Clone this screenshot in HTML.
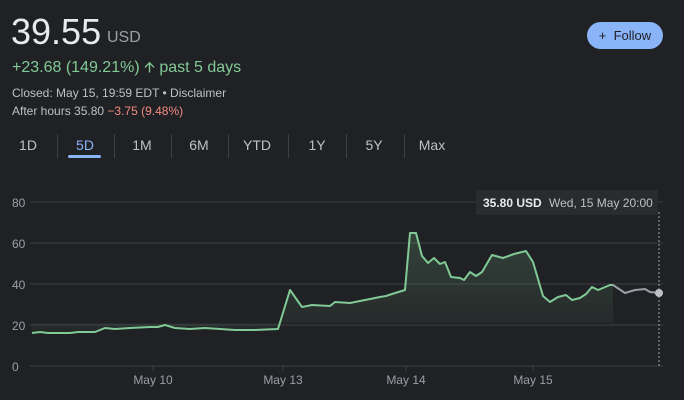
<!DOCTYPE html>
<html><head><style>
body{margin:0;width:684px;height:400px;background:#202124;font-family:"Liberation Sans",Arial,sans-serif;position:relative;overflow:hidden;color:#e8eaed}
.a{position:absolute;white-space:nowrap}
.tab{position:absolute;top:137px;font-size:14px;color:#bdc1c6;transform:translateX(-50%)}
.sep{position:absolute;top:134px;width:1px;height:24px;background:#3c4043}
</style></head><body>
<div class="a" style="left:11px;top:11px;font-size:36px;color:#e8eaed">39.55</div>
<div class="a" style="left:107px;top:29px;font-size:16px;color:#9aa0a6">USD</div>
<div class="a" style="left:12px;top:57px;font-size:16px;color:#81c995">+23.68 (149.21%) <span style="font-size:15px">&#129129;</span> past 5 days</div>
<div class="a" style="left:12px;top:86px;font-size:12px;color:#bdc1c6">Closed: May 15, 19:59 EDT • Disclaimer</div>
<div class="a" style="left:12px;top:104px;font-size:12px;color:#bdc1c6">After hours 35.80 <span style="color:#f28b82">−3.75 (9.48%)</span></div>
<div class="a" style="left:587px;top:22px;width:76px;height:27px;border-radius:14px;background:#8ab4f8;color:#202124;font-size:13px;line-height:27px;text-align:center">+&nbsp; Follow</div>
<div class="tab" style="left:28px">1D</div>
<div class="tab" style="left:85px;color:#8ab4f8">5D</div>
<div class="a" style="left:68px;top:155px;width:33px;height:3px;border-radius:2px;background:#8ab4f8"></div>
<div class="tab" style="left:142px">1M</div>
<div class="tab" style="left:199px">6M</div>
<div class="tab" style="left:257px">YTD</div>
<div class="tab" style="left:317px">1Y</div>
<div class="tab" style="left:374px">5Y</div>
<div class="tab" style="left:432px">Max</div>
<div class="sep" style="left:57px"></div><div class="sep" style="left:114px"></div><div class="sep" style="left:171px"></div><div class="sep" style="left:228px"></div><div class="sep" style="left:288px"></div><div class="sep" style="left:346px"></div><div class="sep" style="left:404px"></div>
<svg class="a" style="left:0;top:0" width="684" height="400">
<defs><linearGradient id="g" x1="0" y1="0" x2="0" y2="1"><stop offset="0" stop-color="#81c995" stop-opacity="0.2"/><stop offset="1" stop-color="#81c995" stop-opacity="0.04"/></linearGradient></defs>
<g stroke="#3c4043" stroke-width="1">
<line x1="30" y1="202" x2="663" y2="202"/><line x1="30" y1="243" x2="663" y2="243"/><line x1="30" y1="284" x2="663" y2="284"/><line x1="30" y1="325" x2="663" y2="325"/><line x1="30" y1="366" x2="663" y2="366"/>
<line x1="153" y1="366" x2="153" y2="371"/><line x1="283" y1="366" x2="283" y2="371"/><line x1="406" y1="366" x2="406" y2="371"/><line x1="533" y1="366" x2="533" y2="371"/>
</g>
<g font-size="12" fill="#9aa0a6">
<text x="12" y="207">80</text><text x="12" y="248">60</text><text x="12" y="289">40</text><text x="12" y="330">20</text><text x="12" y="371">0</text>
<text x="153" y="384" text-anchor="middle">May 10</text><text x="283" y="384" text-anchor="middle">May 13</text><text x="406" y="384" text-anchor="middle">May 14</text><text x="533" y="384" text-anchor="middle">May 15</text>
</g>
<path d="M32,333 L40,332 L48,333 L70,333 L78,332 L95,332 L105,328 L115,329 L130,328 L150,327 L158,327 L165,325 L175,328 L190,329 L205,328 L220,329 L235,330 L255,330 L278,329 L290,290 L302,307 L312,305 L330,306 L335,302 L350,303 L365,300 L380,297 L386,296 L392,294 L405,290 L410,233 L416,233 L422,256 L428,263 L434,258 L440,264 L445,262 L451,277 L460,278 L464,280 L470,272 L476,276 L482,272 L492,255 L503,258 L514,254 L526,251 L533,262 L543,296 L550,302 L558,297 L566,295 L572,300 L580,298 L586,294 L592,287 L598,290 L610,285 L613,285 L613,323 L32,323 Z" fill="url(#g)"/>
<path d="M32,333 L40,332 L48,333 L70,333 L78,332 L95,332 L105,328 L115,329 L130,328 L150,327 L158,327 L165,325 L175,328 L190,329 L205,328 L220,329 L235,330 L255,330 L278,329 L290,290 L302,307 L312,305 L330,306 L335,302 L350,303 L365,300 L380,297 L386,296 L392,294 L405,290 L410,233 L416,233 L422,256 L428,263 L434,258 L440,264 L445,262 L451,277 L460,278 L464,280 L470,272 L476,276 L482,272 L492,255 L503,258 L514,254 L526,251 L533,262 L543,296 L550,302 L558,297 L566,295 L572,300 L580,298 L586,294 L592,287 L598,290 L610,285 L613,285" fill="none" stroke="#81c995" stroke-width="2" stroke-linejoin="round"/>
<path d="M613,285 L625,293 L635,290 L645,289 L650,292 L659,293" fill="none" stroke="#9aa0a6" stroke-width="2"/>
<line x1="659" y1="212" x2="659" y2="366" stroke="#9aa0a6" stroke-dasharray="2,2"/>
<circle cx="659" cy="293" r="4" fill="#bdc1c6"/>
<rect x="476" y="190" width="182" height="25" fill="#2a2b2e"/>
<text x="483" y="207" font-size="12" fill="#e8eaed" font-weight="bold">35.80 USD</text>
<text x="549" y="207" font-size="12" fill="#bdc1c6">Wed, 15 May 20:00</text>
</svg>
</body></html>
